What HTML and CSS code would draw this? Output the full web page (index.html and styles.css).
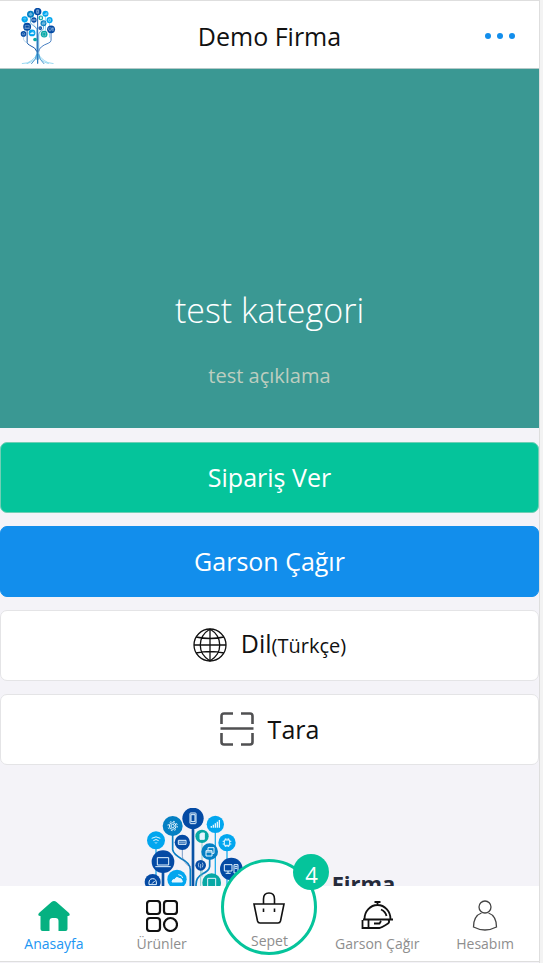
FILE: index.html
```html
<!DOCTYPE html>
<html lang="tr">
<head>
<meta charset="utf-8">
<meta name="viewport" content="width=device-width, initial-scale=1">
<title>Demo Firma</title>
<link rel="stylesheet" href="styles.css">
</head>
<body>
<svg class="defs" aria-hidden="true">
  <symbol id="tree" viewBox="0 0 300 480">
    <g fill="none" stroke-linecap="round">
      <path d="M147 40V470" stroke="#0a52a5" stroke-width="8"/>
      <path d="M86 70V125Q88 138 112 152Q139 165 139 185V440" stroke="#0a7fc4" stroke-width="5"/>
      <path d="M115 115V145Q117 165 139 176" stroke="#3f6fae" stroke-width="2"/>
      <path d="M197 145V175Q196 188 175 198Q156 208 156 230V440" stroke="#0a7fc4" stroke-width="5"/>
      <path d="M214 60V225M249 115V250M36 110V222" stroke="#23aeea" stroke-width="4"/>
      <path d="M174 95V205M170 180V235" stroke="#55b8ba" stroke-width="2"/>
      <path d="M57 180V298Q60 310 80 320Q132 340 139 370" stroke="#0a52a5" stroke-width="8"/>
      <path d="M262 190V277Q262 292 238 302Q160 330 156 370" stroke="#3b76bd" stroke-width="8"/>
      <path d="M26 230V270Q30 288 57 298" stroke="#72aeda" stroke-width="4"/>
      <path d="M139 400Q136 440 95 477M147 400V477M156 400Q160 440 200 477" stroke="#2379bd" stroke-width="7"/>
      <path d="M139 395Q130 435 60 470L15 476M156 395Q168 435 235 468L280 476M139 410Q130 455 55 477M156 410Q165 455 240 477" stroke="#55bde8" stroke-width="5"/>
    </g>
    <g fill="#044aa4"><circle cx="147" cy="31" r="32"/><circle cx="115" cy="103" r="23"/><circle cx="57" cy="161" r="34"/><circle cx="170" cy="172" r="16"/><circle cx="262" cy="183" r="34"/><circle cx="26" cy="222" r="24"/></g>
    <g fill="#047fc3"><circle cx="86" cy="54" r="30"/><circle cx="197" cy="131" r="25"/></g>
    <g fill="#02a6ef"><circle cx="214" cy="49" r="26"/><circle cx="36" cy="97" r="27"/><circle cx="249" cy="104" r="26"/><circle cx="99" cy="214" r="29"/></g>
    <g fill="#07a8a5"><circle cx="174" cy="85" r="20"/><circle cx="203" cy="224" r="28"/><circle cx="125" cy="270" r="16"/></g>
    <g fill="none" stroke="#e5f6ff" stroke-width="3">
      <rect x="138" y="15" width="18" height="32" rx="2"/><path d="M141 20H153V41H141Z"/>
      <circle cx="86" cy="54" r="10"/><circle cx="86" cy="54" r="5"/>
      <circle cx="86" cy="54" r="14" stroke-dasharray="5 6"/>
      <path d="M202 59V54M208 59V50M214 59V46M220 59V41M226 59V36" stroke-width="4"/>
      <path d="M23 91Q36 82 49 91M28 98Q36 91 44 98M33 103L36 106L39 103"/>
      <path d="M103 97H126V109H103ZM108 100V106M114 100V106M120 100V106"/>
      <path d="M168 79L172 75H181V94H168Z" fill="#e5f6ff"/>
      <path d="M241 96H257V112H241ZM244 91V96M249 91V96M254 91V96M244 112V117M249 112V117M254 112V117M236 100H241M236 108H241M257 100H262M257 108H262"/>
      <path d="M186 128H204V144H186ZM192 127V119H210V136H204M186 132H204"/>
      <path d="M40 149H74V171H40ZM34 176H80"/>
      <path d="M170 168V181M165 164Q161 170 165 178M175 164Q179 170 175 178" stroke-width="2"/>
      <path d="M241 170H264V189H241ZM252 189V195M245 196H260M270 170H282V195H270ZM272 176H280M272 181H280"/>
      <path d="M15 230Q13 212 26 212Q39 212 37 230ZM24 227L32 219"/>
      <path d="M84 222Q84 214 92 214Q97 204 105 211Q115 211 115 222Z" fill="#e5f6ff"/><path d="M103 200Q115 201 116 210"/>
      <path d="M191 211H215V240H191Z"/>
    </g>
  </symbol>
</svg>

<div class="phone">
  <header class="topbar">
    <svg class="topbar-logo" role="img" aria-label="Logo"><use href="#tree"/></svg>
    <h1 class="topbar-title">Demo Firma</h1>
    <button class="more" type="button" aria-label="Menü"><i></i><i></i><i></i></button>
  </header>

  <main class="content">
    <section class="hero">
      <h2 class="hero-title">test kategori</h2>
      <p class="hero-text">test açıklama</p>
    </section>
    <div class="actions">
      <button class="action action-order" type="button">Sipariş Ver</button>
      <button class="action action-waiter" type="button">Garson Çağır</button>
      <button class="action" type="button">
        <svg class="action-icon" viewBox="0 0 34 34" fill="none" stroke="#111" stroke-width="1.3" aria-hidden="true">
          <circle cx="17" cy="17" r="16"/><path d="M17 1V33M1 17H33M17 1C4 9 4 25 17 33M17 1C30 9 30 25 17 33M3 9Q17 12 31 9M3 25Q17 22 31 25"/>
        </svg>
        <span>Dil<span class="language">(Türkçe)</span></span>
      </button>
      <button class="action" type="button">
        <svg class="action-icon" viewBox="0 0 34 34" fill="none" stroke="#505052" stroke-width="2.6" aria-hidden="true">
          <path d="M1.5 12V4Q1.5 1.5 4 1.5H13M21 1.5H30Q32.5 1.5 32.5 4V12M1.5 21V30Q1.5 32.5 4 32.5H13M21 32.5H30Q32.5 32.5 32.5 30V21M.5 16.5H33.5"/>
        </svg>
        <span>Tara</span>
      </button>
    </div>
    <section class="company">
      <svg class="company-logo" role="img" aria-label="Logo"><use href="#tree"/></svg>
      <h2 class="company-name">Firma</h2>
    </section>
  </main>

  <nav class="tabbar">
    <a class="tab tab-active" href="#">
      <svg class="tab-icon" viewBox="0 0 32 32" aria-hidden="true"><path fill="#05b181" d="M13.5 2Q16 0 18.5 2L31 13Q33 16 29.5 16V29Q29.5 31 27.5 31H20.5V21Q20.500 18 17.5 18H14.5Q11.5 18 11.5 21V31H4.5Q2.5 31 2.5 29V16Q-1 16 1 13Z"/></svg>
      <span>Anasayfa</span>
    </a>
    <a class="tab" href="#">
      <svg class="tab-icon" viewBox="0 0 32 32" fill="none" stroke="#111" stroke-width="2.2" aria-hidden="true"><rect x="1" y="1" width="13" height="13" rx="3"/><rect x="18" y="1" width="13" height="13" rx="3"/><rect x="1" y="18" width="13" height="13" rx="3"/><circle cx="24.5" cy="24.5" r="6.5"/></svg>
      <span>Ürünler</span>
    </a>
    <a class="tab tab-cart" href="#">
      <span class="cart-ring">
        <svg class="cart-icon" viewBox="0 0 32 32" fill="none" stroke="#111" stroke-width="1.6" aria-hidden="true"><path d="M1 12H31L27.5 29Q27 31 25 31H7Q5 31 4.500 29ZM10.5 12V7Q10.5 1 16 1Q21.5 1 21.5 7V12M10.5 16.5V20M21.5 16.5V20"/></svg>
        <span>Sepet</span>
        <span class="badge">4</span>
      </span>
    </a>
    <a class="tab" href="#">
      <svg class="tab-icon" viewBox="0 0 32 32" fill="none" stroke="#111" stroke-width="1.8" aria-hidden="true"><path d="M13.500 2H19.500M16.5 2V5M3.500 19A13 14 0 0 1 29.500 19M2 19.500H32M20 9.500Q24.500 11.500 25.500 16M1.500 20V28H7.500V20M1.500 28H18.500Q20 28 27 23.500Q29 22 27.500 20M13 23.500H18.500L20 21"/></svg>
      <span>Garson Çağır</span>
    </a>
    <a class="tab" href="#">
      <svg class="tab-icon" viewBox="0 0 32 32" fill="none" stroke="#444" stroke-width="1.3" aria-hidden="true"><circle cx="16" cy="7" r="6"/><path d="M12.5 13C7 15 4.5 20 4.5 27Q16 33 27.5 27C27.5 20 25 15 19.5 13"/></svg>
      <span>Hesabım</span>
    </a>
  </nav>
</div>
</body>
</html>
```

FILE: styles.css
```css
* {
  box-sizing: border-box;
}

body {
  margin: 0;
  background: #f3f3f3;
  font-family: "Open Sans", "Noto Sans", sans-serif;
  color: #111;
}

h1, h2, p {
  margin: 0;
  font-weight: 400;
}

button {
  font: inherit;
  color: inherit;
  cursor: pointer;
}

.defs {
  position: absolute;
  width: 0;
  height: 0;
}

.phone {
  display: flex;
  flex-direction: column;
  height: 100vh;
  margin-right: 3px;
  border-top: 1px solid #dedede;
  border-right: 1px solid #dedede;
  background: #f4f3f8;
}

.topbar {
  display: grid;
  grid-template-columns: 1fr auto 1fr;
  align-items: center;
  flex: none;
  height: 68px;
  padding: 2px 20px 0;
  border-bottom: 1px solid #b5c9c8;
  background: #fff;
}

.topbar-logo {
  width: 36px;
  height: 56px;
}

.topbar-title {
  font-size: 25px;
  line-height: 36px;
}

.more {
  display: flex;
  justify-content: space-between;
  justify-self: end;
  width: 38px;
  padding: 12px 4px;
  border: 0;
  background: none;
}

.more i {
  width: 6px;
  height: 6px;
  border-radius: 50%;
  background: #128eec;
}

.content {
  flex: 1;
  min-height: 0;
  overflow: hidden;
}

.hero {
  display: flex;
  flex-direction: column;
  justify-content: flex-end;
  gap: 24px;
  height: 359px;
  padding-bottom: 36px;
  background: #3a9893;
  text-align: center;
}

.hero-title {
  font-size: 34px;
  font-weight: 300;
  line-height: 52px;
  color: #fff;
}

.hero-text {
  font-size: 20px;
  line-height: 32px;
  color: #bdcec0;
}

.actions {
  display: flex;
  flex-direction: column;
  gap: 13px;
  padding-top: 14px;
}

.action {
  display: flex;
  align-items: center;
  justify-content: center;
  gap: 14px;
  height: 71px;
  padding: 0 0 2px;
  border: 1px solid #e4e4e6;
  border-radius: 7px;
  background: #fff;
  font-size: 25px;
  line-height: 36px;
}

.action-order {
  border-color: #70cfb5;
  background: #05c49b;
  color: #fff;
}

.action-waiter {
  border-color: #128eec;
  background: #128eec;
  color: #fff;
}

.action-icon {
  width: 34px;
  height: 34px;
}

.language {
  font-size: 20px;
}

.company {
  display: flex;
  align-items: flex-start;
  justify-content: center;
  gap: 88px;
  padding-top: 43px;
}

.company-logo {
  width: 100px;
  height: 160px;
}

.company-name {
  padding-top: 59px;
  font-size: 22px;
  font-weight: 700;
  line-height: 32px;
  color: #252b3b;
}

.tabbar {
  display: grid;
  grid-template-columns: repeat(5, 1fr);
  flex: none;
  height: 76px;
  margin-bottom: 1px;
  border-bottom: 1px solid #dedede;
  background: #fff;
}

.tab {
  display: flex;
  flex-direction: column;
  align-items: center;
  gap: 2px;
  padding-top: 14px;
  font-size: 14px;
  line-height: 20px;
  color: #8e8e8e;
  text-decoration: none;
  white-space: nowrap;
}

.tab-active {
  color: #2196f3;
}

.tab-icon {
  width: 32px;
  height: 32px;
}

.tab-cart {
  padding-top: 0;
}

.cart-ring {
  position: relative;
  display: flex;
  flex-direction: column;
  align-items: center;
  gap: 7px;
  width: 96px;
  height: 96px;
  margin-top: -27px;
  padding-top: 30px;
  border: 3px solid #05c49b;
  border-radius: 50%;
  background: #fff;
}

.cart-icon {
  width: 32px;
  height: 32px;
}

.badge {
  position: absolute;
  top: -8px;
  right: -15px;
  width: 36px;
  height: 36px;
  border-radius: 50%;
  background: #05c49b;
  color: #fff;
  font-size: 22px;
  line-height: 40px;
  text-align: center;
}
```
